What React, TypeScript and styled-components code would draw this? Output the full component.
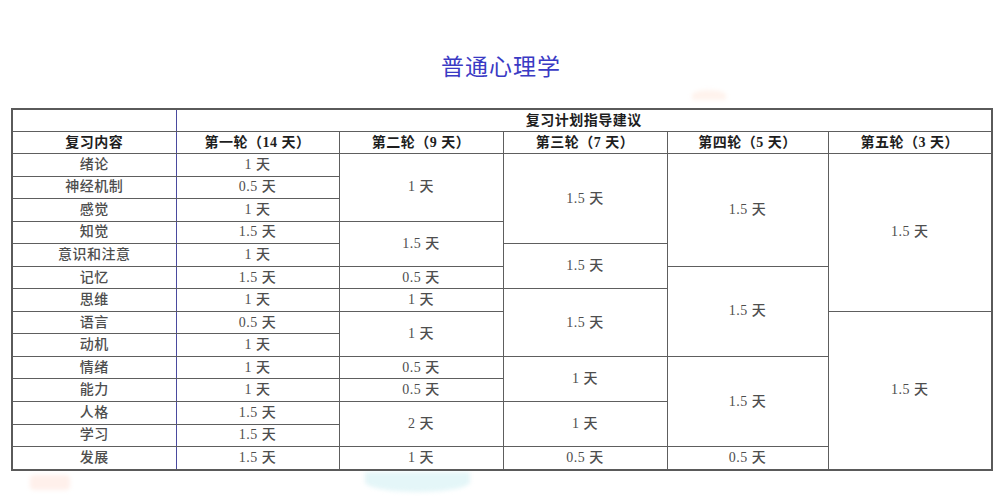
import React from 'react';
import styled, { createGlobalStyle } from 'styled-components';

const GlobalStyle = createGlobalStyle`
  html, body {
    margin: 0;
    padding: 0;
    background: #ffffff;
  }
  body {
    font-family: "Liberation Serif", "Noto Sans CJK SC", serif;
  }
`;

const Page = styled.div`
  position: relative;
  width: 1000px;
  height: 500px;
  padding: 52px 9px 0 11px;
  box-sizing: border-box;
  overflow: hidden;
`;

const Title = styled.h1`
  margin: 0 0 30px;
  height: 26px;
  line-height: 26px;
  text-align: center;
  font-family: "Noto Sans CJK SC", sans-serif;
  font-weight: 400;
  font-size: 23px;
  letter-spacing: 1px;
  color: #3a3ac4;
`;

const Blob = styled.div<{ $x: number; $y: number; $w: number; $h: number; $c: string; $r: string }>`
  position: absolute;
  left: ${(p) => p.$x}px;
  top: ${(p) => p.$y}px;
  width: ${(p) => p.$w}px;
  height: ${(p) => p.$h}px;
  background: ${(p) => p.$c};
  border-radius: ${(p) => p.$r};
  filter: blur(2px);
  z-index: 0;
`;

const Table = styled.table`
  position: relative;
  z-index: 1;
  width: 980px;
  border-collapse: collapse;
  table-layout: fixed;
  background: transparent;
  border: 2px solid #5a5a5a;
`;

const Col = styled.col<{ $w: number }>`
  width: ${(p) => p.$w}px;
`;

const HeadCell = styled.th<{ $first?: boolean }>`
  height: 21px;
  padding: 0;
  border: 1.5px solid #5e5e5e;
  border-right-color: ${(p) => (p.$first ? '#4a4a9e' : '#5e5e5e')};
  font-family: "Liberation Serif", "Noto Sans CJK SC", serif;
  font-size: 14px;
  font-weight: 700;
  color: #1e1e1e;
  text-align: center;
  vertical-align: middle;
  line-height: 1;
  letter-spacing: 0.5px;
  background: rgba(255, 255, 255, 0.7);
`;

const Cell = styled.td<{ $first?: boolean }>`
  height: 21.55px;
  padding: 0;
  border: 1.5px solid #5e5e5e;
  border-right-color: ${(p) => (p.$first ? '#4a4a9e' : '#5e5e5e')};
  font-family: "Liberation Serif", "Noto Sans CJK SC", serif;
  font-size: 14px;
  font-weight: 500;
  color: #4e4e4e;
  text-align: center;
  vertical-align: middle;
  line-height: 1;
  letter-spacing: 0.5px;
  background: rgba(255, 255, 255, 0.7);
`;

type CellData = { text: string; span?: number };

const rows: { topic: string; cells: CellData[] }[] = [
  { topic: '绪论', cells: [{ text: '1 天' }, { text: '1 天', span: 3 }, { text: '1.5 天', span: 4 }, { text: '1.5 天', span: 5 }, { text: '1.5 天', span: 7 }] },
  { topic: '神经机制', cells: [{ text: '0.5 天' }] },
  { topic: '感觉', cells: [{ text: '1 天' }] },
  { topic: '知觉', cells: [{ text: '1.5 天' }, { text: '1.5 天', span: 2 }] },
  { topic: '意识和注意', cells: [{ text: '1 天' }, { text: '1.5 天', span: 2 }] },
  { topic: '记忆', cells: [{ text: '1.5 天' }, { text: '0.5 天' }, { text: '1.5 天', span: 4 }] },
  { topic: '思维', cells: [{ text: '1 天' }, { text: '1 天' }, { text: '1.5 天', span: 3 }] },
  { topic: '语言', cells: [{ text: '0.5 天' }, { text: '1 天', span: 2 }, { text: '1.5 天', span: 7 }] },
  { topic: '动机', cells: [{ text: '1 天' }] },
  { topic: '情绪', cells: [{ text: '1 天' }, { text: '0.5 天' }, { text: '1 天', span: 2 }, { text: '1.5 天', span: 4 }] },
  { topic: '能力', cells: [{ text: '1 天' }, { text: '0.5 天' }] },
  { topic: '人格', cells: [{ text: '1.5 天' }, { text: '2 天', span: 2 }, { text: '1 天', span: 2 }] },
  { topic: '学习', cells: [{ text: '1.5 天' }] },
  { topic: '发展', cells: [{ text: '1.5 天' }, { text: '1 天' }, { text: '0.5 天' }, { text: '0.5 天' }] },
];

const rounds = ['第一轮（14 天）', '第二轮（9 天）', '第三轮（7 天）', '第四轮（5 天）', '第五轮（3 天）'];
const widths = [164, 163, 164, 164, 161, 164];

const App: React.FC = () => {
  return (
    <>
      <GlobalStyle />
      <Page>
        <Blob $x={692} $y={90} $w={34} $h={10} $c="rgba(255, 200, 175, 0.22)" $r="50% 50% 0 0" />
        <Blob $x={30} $y={475} $w={40} $h={15} $c="rgba(255, 205, 190, 0.3)" $r="4px" />
        <Blob $x={365} $y={472} $w={105} $h={20} $c="rgba(195, 236, 240, 0.45)" $r="0 0 50% 50%" />
        <Title>普通心理学</Title>
        <Table>
          <colgroup>
            {widths.map((w, i) => (
              <Col key={i} $w={w} />
            ))}
          </colgroup>
          <thead>
            <tr>
              <HeadCell $first />
              <HeadCell colSpan={5}>复习计划指导建议</HeadCell>
            </tr>
            <tr>
              <HeadCell $first>复习内容</HeadCell>
              {rounds.map((r) => (
                <HeadCell key={r}>{r}</HeadCell>
              ))}
            </tr>
          </thead>
          <tbody>
            {rows.map((row) => (
              <tr key={row.topic}>
                <Cell $first>{row.topic}</Cell>
                {row.cells.map((c, i) => (
                  <Cell key={i} rowSpan={c.span}>
                    {c.text}
                  </Cell>
                ))}
              </tr>
            ))}
          </tbody>
        </Table>
      </Page>
    </>
  );
};

export default App;
